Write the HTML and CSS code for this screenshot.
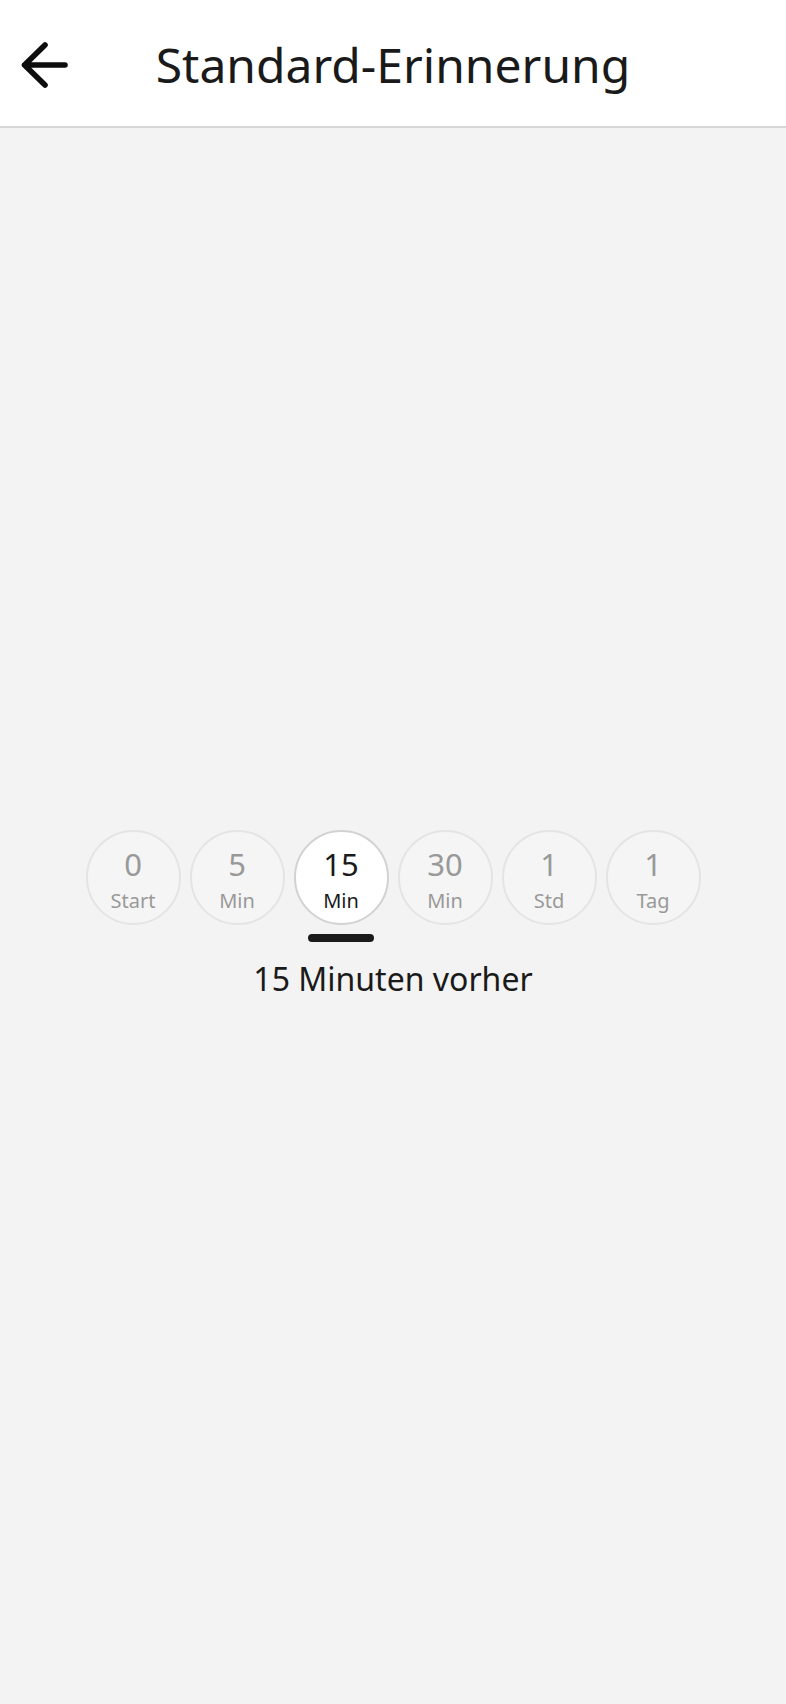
FILE: index.html
```html
<!DOCTYPE html>
<html lang="de">
<head>
<meta charset="utf-8">
<title>Standard-Erinnerung</title>
<link rel="stylesheet" href="styles.css">
</head>
<body>
<header class="appbar">
  <button class="back" aria-label="Zurück">
    <svg width="50" height="50" viewBox="0 0 50 50" fill="none" stroke="#0d0d0d" stroke-width="5.6" stroke-linecap="round" stroke-linejoin="round">
      <path d="M25 5 L4.5 25 L25 45 M4.5 25 H45"/>
    </svg>
  </button>
  <h1 class="title">Standard-Erinnerung</h1>
  <span class="spacer"></span>
</header>
<main class="content">
  <div class="options">
    <div class="option">
      <div class="circle"><span class="num">0</span><span class="unit">Start</span></div>
      <span class="indicator"></span>
    </div>
    <div class="option">
      <div class="circle"><span class="num">5</span><span class="unit">Min</span></div>
      <span class="indicator"></span>
    </div>
    <div class="option selected">
      <div class="circle"><span class="num">15</span><span class="unit">Min</span></div>
      <span class="indicator"></span>
    </div>
    <div class="option">
      <div class="circle"><span class="num">30</span><span class="unit">Min</span></div>
      <span class="indicator"></span>
    </div>
    <div class="option">
      <div class="circle"><span class="num">1</span><span class="unit">Std</span></div>
      <span class="indicator"></span>
    </div>
    <div class="option">
      <div class="circle"><span class="num">1</span><span class="unit">Tag</span></div>
      <span class="indicator"></span>
    </div>
  </div>
  <p class="summary">15 Minuten vorher</p>
</main>
</body>
</html>
```
FILE: styles.css
```css
* { box-sizing: border-box; }
html, body {
  margin: 0;
  padding: 0;
}
body {
  background: #f3f3f3;
  font-family: "Noto Sans", "Open Sans", "Liberation Sans", sans-serif;
  color: #1a1a1a;
  min-height: 1704px;
}
.appbar {
  height: 128px;
  padding-top: 4px;
  background: #ffffff;
  border-bottom: 2px solid #d6d6d9;
  display: grid;
  grid-template-columns: 1fr auto 1fr;
  align-items: center;
}
.back {
  justify-self: start;
  margin-left: 20px;
  width: 50px;
  height: 50px;
  padding: 0;
  border: 0;
  background: none;
  display: flex;
}
.title {
  margin: 0;
  font-size: 48px;
  line-height: 48px;
  font-weight: 400;
  color: #1a1a1a;
}
.content {
  padding-top: 702px;
  display: flex;
  flex-direction: column;
  align-items: center;
}
.options {
  display: flex;
  gap: 9px;
  justify-content: center;
}
.option {
  display: flex;
  flex-direction: column;
  align-items: center;
}
.circle {
  width: 95px;
  height: 95px;
  border-radius: 50%;
  border: 2px solid #e4e4e4;
  background: #f5f5f5;
  display: flex;
  flex-direction: column;
  align-items: center;
  padding-top: 17px;
  color: #999999;
}
.num {
  font-size: 31px;
  line-height: 30px;
}
.unit {
  margin-top: 12px;
  font-size: 20px;
  line-height: 20px;
}
.indicator {
  margin-top: 9px;
  width: 66px;
  height: 8px;
  border-radius: 4px;
}
.selected .circle {
  background: #ffffff;
  border-color: #d2d2d2;
  color: #1a1a1a;
}
.selected .indicator {
  background: #1a1a1a;
}
.summary {
  margin: 15px 0 0;
  font-size: 32px;
  line-height: 44px;
  color: #1a1a1a;
}
```
